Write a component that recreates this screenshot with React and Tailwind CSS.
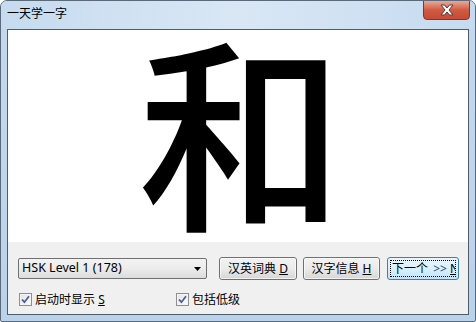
import React from "react";

const ui = { fontFamily: '"Noto Sans", "Noto Sans CJK SC", sans-serif' };

function CheckBox({ label, u }) {
  return (
    <div className="flex items-center gap-[3px]">
      <div className="w-[13px] h-[13px] border border-[#8e8f8f] bg-gradient-to-br from-[#dcdcdc] to-[#fbfbfb] flex items-center justify-center">
        <div className="w-[11px] h-[11px] border border-[#f4f4f4] bg-gradient-to-br from-[#e6e6e6] to-[#fafafa] flex items-center justify-center">
          <svg width="9" height="9" viewBox="0 0 9 9">
            <path d="M1 4.5 L3.4 7.2 L8 1.2" stroke="#4a5f97" strokeWidth="1.8" fill="none" />
          </svg>
        </div>
      </div>
      <span className="text-[12px] leading-none text-black">
        {label}
        {u && (
          <>
            {" "}
            <span className="underline">{u}</span>
          </>
        )}
      </span>
    </div>
  );
}

function Btn({ label, u, w }) {
  return (
    <div
      className={`${w} h-[23px] rounded-[3px] border border-[#707070] bg-gradient-to-b from-[#f2f2f2] via-[#ebebeb] to-[#d6d6d6]`}
    >
      <div className="w-full h-full rounded-[2px] border border-[#fcfcfc]/70 flex items-center justify-center text-[12px] text-black leading-none whitespace-nowrap">
        {label} <span className="underline ml-[3px]">{u}</span>
      </div>
    </div>
  );
}

export default function App() {
  return (
    <div className="w-[476px] h-[322px] bg-white" style={ui}>
      <div className="w-[476px] h-[322px] rounded-t-[7px] rounded-b-[2px] border border-[#5a6a7a] bg-gradient-to-b from-[#c4d9ee] via-[#c0d6ed] to-[#bad2ea] flex flex-col relative overflow-hidden">
        {/* title bar */}
        <div className="h-[28px] flex items-start pl-[6px] pt-[7px] bg-gradient-to-r from-[#c6dbef] via-[#d9e7f5] to-[#c6dbef]">
          <span className="text-[12px] leading-none text-black">一天学一字</span>
        </div>
        {/* close button */}
        <div className="absolute left-[422px] top-[-1px] w-[47px] h-[20px] rounded-b-[4px] border border-[#7a3a30] bg-gradient-to-b from-[#e9a898] via-[#cf5a42] to-[#c94a33] flex items-center justify-center">
          <svg width="16" height="12" viewBox="0 0 16 12">
            <path
              d="M2 1 H5.5 L8 4 L10.5 1 H14 L10 6 L14 11 H10.5 L8 8 L5.5 11 H2 L6 6 Z"
              fill="#ffffff"
              stroke="#5a3a36"
              strokeWidth="1"
              strokeLinejoin="round"
            />
          </svg>
        </div>
        {/* client */}
        <div className="mx-[6px] mb-[6px] flex-1 border border-[#4f5d6b] bg-[#f0f0f0] flex flex-col">
          <div className="h-[212px] bg-white flex items-center justify-center overflow-hidden">
            <span
              className="text-[206px] leading-[0.9] font-medium text-black mb-[20px] ml-[6px]"
              style={{ fontFamily: '"Noto Sans CJK SC", sans-serif' }}
            >
              和
            </span>
          </div>
          <div className="flex items-center pl-[10px] pt-[15px] gap-[12px]">
            <div className="w-[189px] h-[21px] rounded-[2px] border border-[#707070] bg-gradient-to-b from-[#f3f3f3] via-[#ececec] to-[#dcdcdc] flex items-center justify-between pl-[3px] pr-[5px]">
              <span className="text-[12.5px] leading-none text-black">HSK Level 1 (178)</span>
              <svg width="7" height="4" viewBox="0 0 7 4">
                <path d="M0 0 H7 L3.5 4 Z" fill="#000" />
              </svg>
            </div>
            <div className="flex items-center gap-[6px]">
              <Btn w="w-[78px]" label="汉英词典" u="D" />
              <Btn w="w-[77px]" label="汉字信息" u="H" />
              <div className="ml-[1px] w-[72px] h-[23px] rounded-[3px] border border-[#3c7fb1] bg-gradient-to-b from-[#eaf6fd] via-[#d9f0fc] to-[#bfe5fa] p-[2px]">
                <div className="w-full h-full border border-dotted border-black overflow-hidden flex items-center">
                  <span className="text-[12px] leading-none text-black whitespace-nowrap pl-[1px]">
                    下一个 <span className="text-[#2a4a7a] ml-[2px]">&gt;&gt;</span> <span className="underline">N</span>
                  </span>
                </div>
              </div>
            </div>
          </div>
          <div className="flex items-center pl-[11px] pt-[13px]">
            <div className="w-[157px]">
              <CheckBox label="启动时显示" u="S" />
            </div>
            <CheckBox label="包括低级" />
          </div>
        </div>
      </div>
    </div>
  );
}
